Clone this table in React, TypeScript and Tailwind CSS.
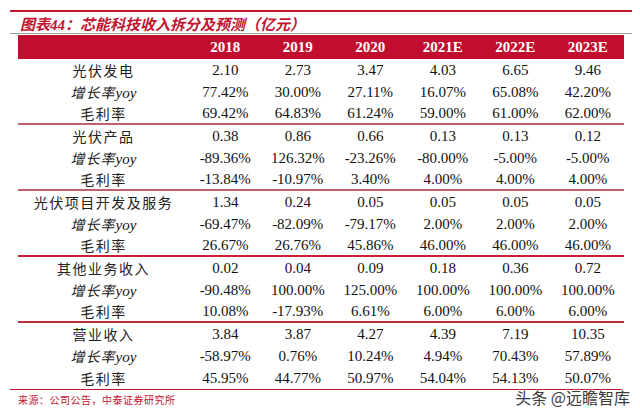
import React from 'react';

type Row = { label: string; yoy?: boolean; values: string[] };

const groups: Row[][] = [
  [
    { label: '光伏发电', values: ['2.10', '2.73', '3.47', '4.03', '6.65', '9.46'] },
    { label: '增长率', yoy: true, values: ['77.42%', '30.00%', '27.11%', '16.07%', '65.08%', '42.20%'] },
    { label: '毛利率', values: ['69.42%', '64.83%', '61.24%', '59.00%', '61.00%', '62.00%'] },
  ],
  [
    { label: '光伏产品', values: ['0.38', '0.86', '0.66', '0.13', '0.13', '0.12'] },
    { label: '增长率', yoy: true, values: ['-89.36%', '126.32%', '-23.26%', '-80.00%', '-5.00%', '-5.00%'] },
    { label: '毛利率', values: ['-13.84%', '-10.97%', '3.40%', '4.00%', '4.00%', '4.00%'] },
  ],
  [
    { label: '光伏项目开发及服务', values: ['1.34', '0.24', '0.05', '0.05', '0.05', '0.05'] },
    { label: '增长率', yoy: true, values: ['-69.47%', '-82.09%', '-79.17%', '2.00%', '2.00%', '2.00%'] },
    { label: '毛利率', values: ['26.67%', '26.76%', '45.86%', '46.00%', '46.00%', '46.00%'] },
  ],
  [
    { label: '其他业务收入', values: ['0.02', '0.04', '0.09', '0.18', '0.36', '0.72'] },
    { label: '增长率', yoy: true, values: ['-90.48%', '100.00%', '125.00%', '100.00%', '100.00%', '100.00%'] },
    { label: '毛利率', values: ['10.08%', '-17.93%', '6.61%', '6.00%', '6.00%', '6.00%'] },
  ],
  [
    { label: '营业收入', values: ['3.84', '3.87', '4.27', '4.39', '7.19', '10.35'] },
    { label: '增长率', yoy: true, values: ['-58.97%', '0.76%', '10.24%', '4.94%', '70.43%', '57.89%'] },
    { label: '毛利率', values: ['45.95%', '44.77%', '50.97%', '54.04%', '54.13%', '50.07%'] },
  ],
];

const years = ['2018', '2019', '2020', '2021E', '2022E', '2023E'];

const dividers = ['border-[#c0606e]', 'border-[#c0606e]', 'border-[#c8202f]', 'border-[#b8303e]', ''];

const cjk = "font-['Noto_Sans_CJK_SC',sans-serif]";

const TableRow = ({ row, last, border }: { row: Row; last: boolean; border: string }) => (
  <div
    className={`grid grid-cols-[171px_repeat(6,1fr)] items-center ${last && border ? `h-[22px] border-b-2 ${border}` : 'h-[22px]'}`}
  >
    <div className="flex justify-center leading-[18px]">
      {row.yoy ? (
        <span className="italic">
          <span className={`${cjk} text-[14px] tracking-[1px] text-[#222]`}>{row.label}</span>
          <span className="text-[15px]">yoy</span>
        </span>
      ) : (
        <span className={`${cjk} text-[14px] tracking-[1.5px] text-[#222]`}>{row.label}</span>
      )}
    </div>
    {row.values.map((v, i) => (
      <div key={i} className="text-center text-[15px] leading-[16px]">
        {v}
      </div>
    ))}
  </div>
);

export default function App() {
  return (
    <div className="relative w-[640px] h-[414px] overflow-hidden bg-white pt-[10px] font-['Liberation_Serif',serif] text-[#111]">
      <div className="ml-[10px] w-[622px] h-[2px] bg-[#c0142f]" />
      <div className="ml-[10px] w-[622px] h-[22px] border-b border-[#a0a0a0] pl-[10px] pt-[4px] flex items-center">
        <span className={`${cjk} italic font-bold text-[15px] text-[#c0142f] leading-none`}>
          图表<span className="font-['Liberation_Serif',serif]">44</span>：芯能科技收入拆分及预测（亿元）
        </span>
      </div>

      <div className="ml-[18px] w-[606px]">
        <div className="grid grid-cols-[171px_repeat(6,1fr)] items-center h-[24px] bg-[#c20e2e] mt-[1px]">
          <div />
          {years.map((y) => (
            <div key={y} className="text-center text-[15px] font-bold text-white">
              {y}
            </div>
          ))}
        </div>

        {groups.map((g, gi) => (
          <div key={gi}>
            {g.map((row, ri) => (
              <TableRow key={ri} row={row} last={ri === 2} border={dividers[gi]} />
            ))}
          </div>
        ))}
      </div>

      <div className="ml-[10px] w-[612px] h-[1px] bg-[#c0142f]" />
      <div className={`ml-[18px] mt-[2px] ${cjk} text-[10px] tracking-[0.5px] text-[#c0142f]`}>
        来源：公司公告，中泰证券研究所
      </div>

      <div
        className={`absolute right-[10px] top-[389px] ${cjk} text-[16px] text-[#3a3a3a] leading-none`}
        style={{ textShadow: '0 0 2px #fff, 0 0 2px #fff, 0 0 1px #fff' }}
      >
        头条 @远瞻智库
      </div>
    </div>
  );
}
